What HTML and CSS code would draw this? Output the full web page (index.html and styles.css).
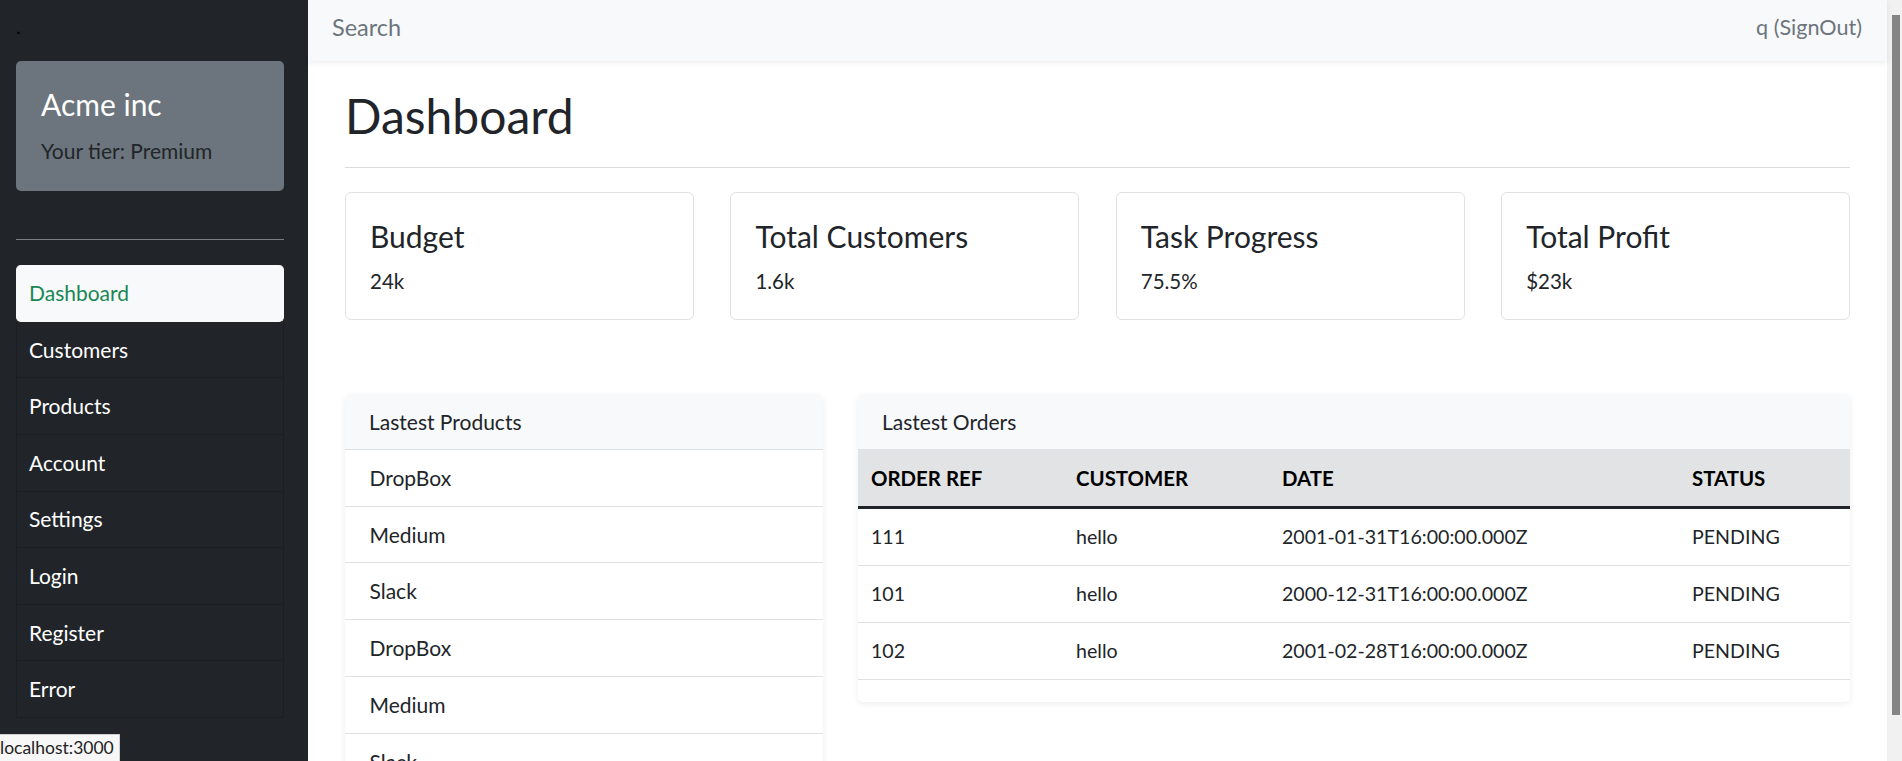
FILE: index.html
```html
<!DOCTYPE html>
<html lang="en">
<head>
<meta charset="utf-8">
<title>Dashboard</title>
<link rel="stylesheet" href="styles.css">
</head>
<body>
<div class="app">
  <aside class="sidebar">
    <div class="brand">.</div>
    <div class="org-card">
      <div class="org-name">Acme inc</div>
      <div class="org-tier">Your tier: Premium</div>
    </div>
    <hr class="side-hr">
    <nav class="side-nav">
      <a class="side-link active">Dashboard</a>
      <a class="side-link">Customers</a>
      <a class="side-link">Products</a>
      <a class="side-link">Account</a>
      <a class="side-link">Settings</a>
      <a class="side-link">Login</a>
      <a class="side-link">Register</a>
      <a class="side-link">Error</a>
    </nav>
  </aside>

  <div class="main">
    <header class="topbar">
      <span class="search">Search</span>
      <span class="user">q (SignOut)</span>
    </header>

    <div class="content">
      <h1 class="page-title">Dashboard</h1>
      <hr class="title-hr">

      <div class="stats">
        <div class="stat-card">
          <div class="stat-title">Budget</div>
          <div class="stat-value">24k</div>
        </div>
        <div class="stat-card">
          <div class="stat-title">Total Customers</div>
          <div class="stat-value">1.6k</div>
        </div>
        <div class="stat-card">
          <div class="stat-title">Task Progress</div>
          <div class="stat-value">75.5%</div>
        </div>
        <div class="stat-card">
          <div class="stat-title">Total Profit</div>
          <div class="stat-value">$23k</div>
        </div>
      </div>

      <div class="panels">
        <section class="panel">
          <div class="panel-header">Lastest Products</div>
          <ul class="product-list">
            <li>DropBox</li>
            <li>Medium</li>
            <li>Slack</li>
            <li>DropBox</li>
            <li>Medium</li>
            <li>Slack</li>
          </ul>
        </section>

        <section class="panel orders">
          <div class="panel-header">Lastest Orders</div>
          <table class="orders-table">
            <colgroup>
              <col class="col-ref">
              <col class="col-customer">
              <col class="col-date">
              <col class="col-status">
            </colgroup>
            <thead>
              <tr><th>Order Ref</th><th>Customer</th><th>Date</th><th>Status</th></tr>
            </thead>
            <tbody>
              <tr><td>111</td><td>hello</td><td>2001-01-31T16:00:00.000Z</td><td>PENDING</td></tr>
              <tr><td>101</td><td>hello</td><td>2000-12-31T16:00:00.000Z</td><td>PENDING</td></tr>
              <tr><td>102</td><td>hello</td><td>2001-02-28T16:00:00.000Z</td><td>PENDING</td></tr>
            </tbody>
          </table>
        </section>
      </div>
    </div>
  </div>

  <div class="scrollbar"><div class="scroll-thumb"></div></div>
</div>
<div class="status-bubble">localhost:3000</div>
</body>
</html>
```

FILE: styles.css
```css
html, body {
  margin: 0;
  height: 100%;
  overflow: hidden;
}

body {
  font-family: Lato, "Segoe UI", "Noto Sans", sans-serif;
  font-size: 21px;
  line-height: 30px;
  color: #212529;
  background: #ffffff;
}

.app {
  display: flex;
  height: 100vh;
}

/* ---------- sidebar ---------- */
.sidebar {
  width: 308px;
  flex: none;
  box-sizing: border-box;
  background: #212529;
  padding: 0 24px 0 16px;
}

.brand {
  height: 61px;
  box-sizing: border-box;
  padding-top: 16px;
  font-size: 20px;
  line-height: 20px;
  color: #000;
}

.org-card {
  height: 130px;
  box-sizing: border-box;
  background: #6c757d;
  border-radius: 5px;
  padding: 25px 25px 0;
}

.org-name {
  font-size: 30px;
  line-height: 36px;
  color: #fff;
}

.org-tier {
  margin-top: 14px;
  font-size: 21px;
  line-height: 30px;
  color: #212529;
}

.side-hr {
  margin: 48px 0 25.2px;
  border: 0;
  border-top: 1px solid #7a7d81;
  height: 0;
}

.side-nav {
  display: flex;
  flex-direction: column;
}

.side-link {
  display: block;
  padding: 12.8px 12px;
  line-height: 30px;
  color: #fff;
  border: 1px solid #1b1e22;
  border-top: 0;
  text-decoration: none;
}

.side-link.active {
  background: #f8f9fa;
  color: #198754;
  border-color: #f8f9fa;
  border-radius: 5px;
}

/* ---------- main ---------- */
.main {
  flex: 1;
  min-width: 0;
  display: flex;
  flex-direction: column;
}

.topbar {
  height: 61px;
  flex: none;
  box-sizing: border-box;
  padding: 12px 25px 0 24px;
  display: flex;
  justify-content: space-between;
  align-items: flex-start;
  background: #f8f9fa;
  color: #6c757d;
  box-shadow: 0 2px 6px rgba(0, 0, 0, 0.07);
  position: relative;
  z-index: 1;
}

.search {
  font-size: 23.5px;
}

.user {
  font-size: 21.6px;
}

.content {
  padding: 0 37px;
}

.page-title {
  margin: 26px 0 0;
  font-size: 48px;
  line-height: 1.2;
  font-weight: 400;
  color: #212529;
}

.title-hr {
  margin: 22.4px 0 23.6px;
  border: 0;
  border-top: 1px solid #dcdcdc;
  height: 0;
}

.stats {
  display: grid;
  grid-template-columns: repeat(4, 1fr);
  gap: 36.5px;
}

.stat-card {
  border: 1px solid #dfe1e3;
  border-radius: 6px;
  padding: 25.3px 24px 22.8px;
}

.stat-title {
  font-size: 30px;
  line-height: 36px;
}

.stat-value {
  margin-top: 12.5px;
  font-size: 20.5px;
  line-height: 30px;
}

.panels {
  margin-top: 73.7px;
  display: grid;
  grid-template-columns: 478fr 992fr;
  gap: 35px;
  align-items: start;
}

.panel {
  background: #fff;
  border-radius: 5px;
  box-shadow: 0 2px 6px rgba(0, 0, 0, 0.075);
  overflow: hidden;
}

.panel-header {
  background: #f8f9fa;
  padding: 13.5px 24px 11.5px;
  line-height: 30px;
  border-bottom: 1px solid #dee2e6;
}

.product-list {
  list-style: none;
  margin: 0;
  padding: 0;
}

.product-list li {
  padding: 12.9px 24.5px;
  line-height: 30px;
  border-bottom: 1px solid #dee2e6;
}

.orders {
  padding-bottom: 22px;
}

.orders-table {
  width: 100%;
  border-collapse: collapse;
  table-layout: fixed;
}

.col-ref { width: 205px; }
.col-customer { width: 206px; }
.col-date { width: 410px; }

.orders-table th,
.orders-table td {
  text-align: left;
  padding: 13px 13px;
  line-height: 30px;
  box-sizing: border-box;
}

.orders-table th {
  background: #e2e3e5;
  color: #000;
  font-size: 20.4px;
  font-weight: 700;
  text-transform: uppercase;
  padding: 13px 13px;
  border-bottom: 3px solid #212529;
}

.orders-table td {
  font-size: 19.6px;
  border-bottom: 1px solid #dee2e6;
}

/* ---------- fake window scrollbar ---------- */
.scrollbar {
  width: 15px;
  flex: none;
  background: #f1f1f1;
}

.scroll-thumb {
  margin: 15px 2px 0 5px;
  height: 700px;
  background: #858585;
}

/* ---------- browser status bubble ---------- */
.status-bubble {
  position: fixed;
  left: 0;
  bottom: 0;
  height: 27px;
  box-sizing: border-box;
  padding: 0 5px 0 0;
  font-size: 17.5px;
  line-height: 26px;
  color: #222;
  background: #f7f7f7;
  border-top: 1px solid #cfcfcf;
  border-right: 1px solid #cfcfcf;
}
```
